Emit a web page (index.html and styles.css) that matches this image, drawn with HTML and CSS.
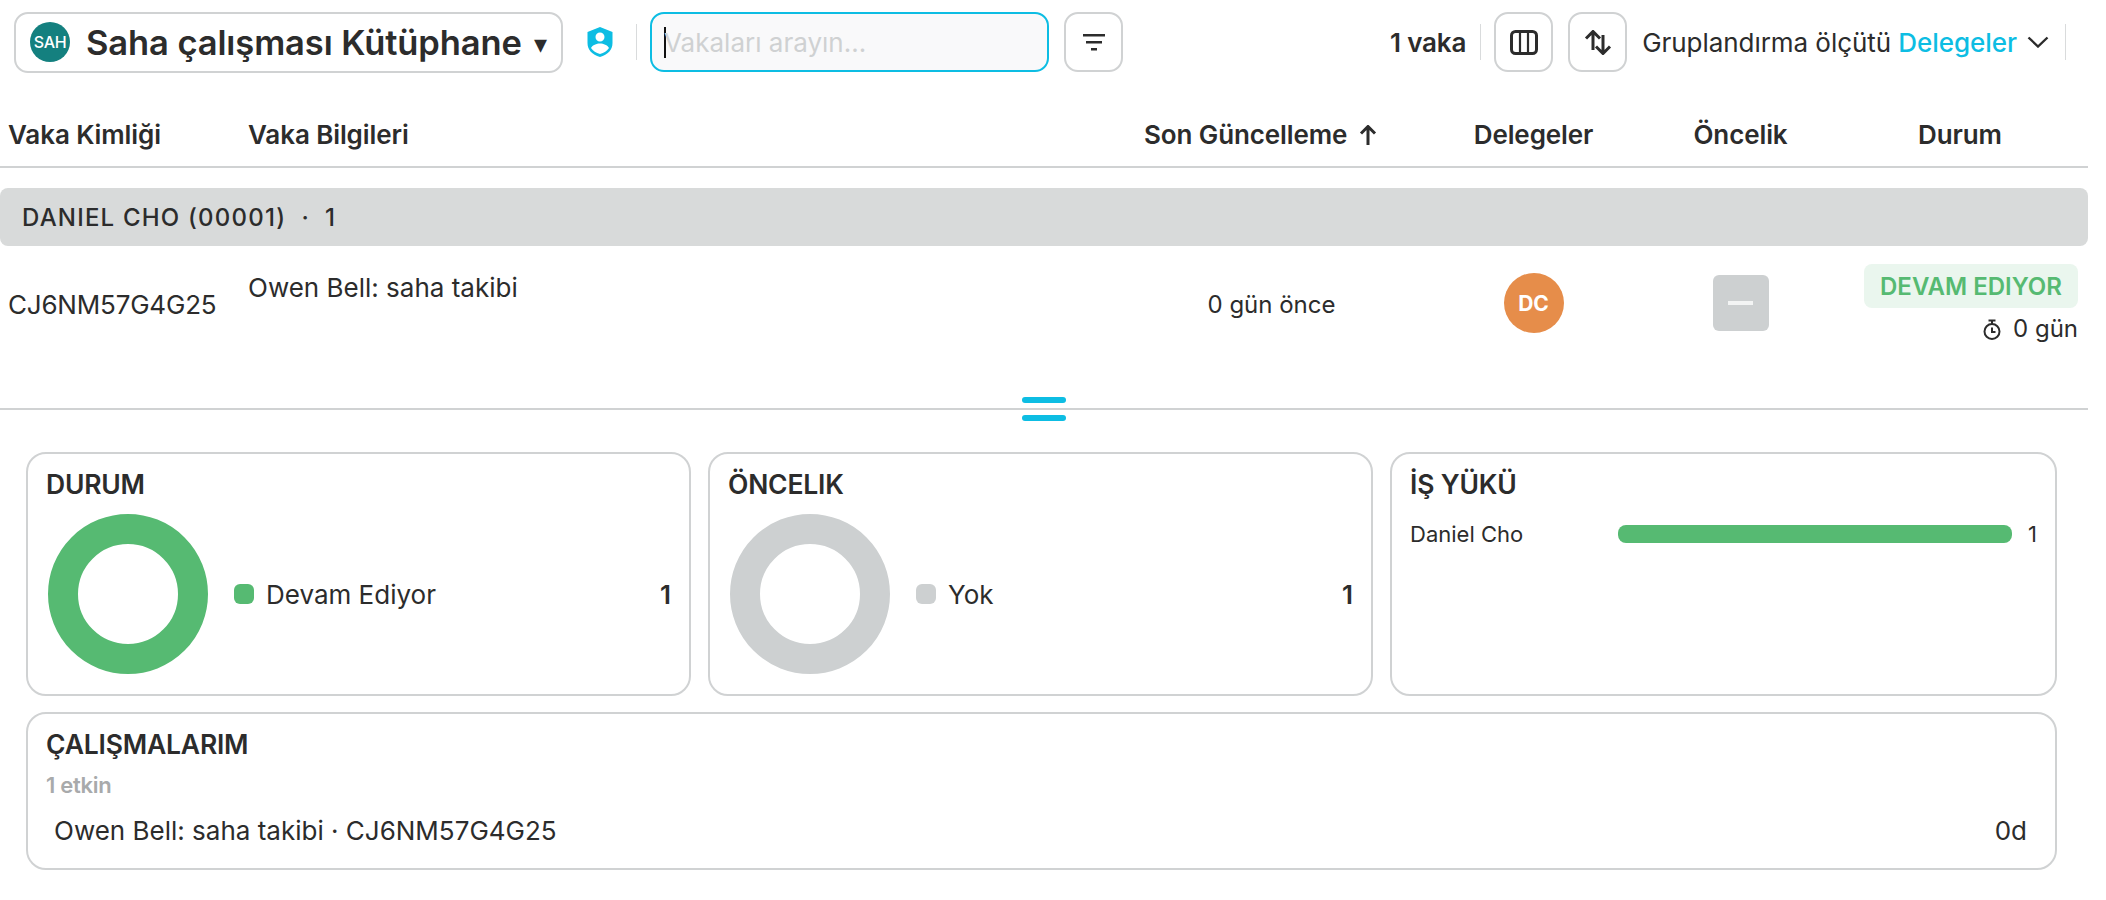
FILE: index.html
```html
<!DOCTYPE html>
<html lang="tr">
<head>
<meta charset="utf-8">
<title>Saha çalışması Kütüphane</title>
<link rel="stylesheet" href="styles.css">
</head>
<body>
<div class="page">
  <header class="toolbar">
    <button class="lib-select">
      <span class="lib-avatar">SAH</span>
      <span class="lib-name">Saha çalışması Kütüphane</span>
      <span class="lib-caret">▾</span>
    </button>
    <svg class="shield" viewBox="0 0 26 30"><path fill="#0dbde3" fill-rule="evenodd" d="M13 0 25.500 5v11c0 7-4.500 11.500-12.500 14C5 27.500.5 23 .5 16V5zM13 5.500a4.500 4.500 0 1 0 0 9 4.500 4.500 0 0 0 0-9zM4 21c2 3 5 5 9 6 4-1 7-3 9-6-1.500-3-5.500-4.500-9-4.500S5.500 18 4 21z"/></svg>
    <span class="vsep sep-a"></span>
    <div class="search"><span class="cursor"></span><span class="placeholder">Vakaları arayın...</span></div>
    <button class="icon-btn filter-btn">
      <svg width="24" height="24" viewBox="0 0 24 24"><path fill="#2c2c2c" d="M1 4h22v2.600H1zM4 11h16v2.600H4zM9 18h6v2.600H9z"/></svg>
    </button>
    <span class="spacer"></span>
    <span class="count">1 vaka</span>
    <span class="vsep sep-b"></span>
    <button class="icon-btn">
      <svg width="28" height="25" viewBox="0 0 28 25" fill="none" stroke="#2c2c2c"><rect x="1.500" y="1.500" width="25" height="22" rx="4" stroke-width="3"/><path stroke-width="2.200" d="M10 2v21M18 2v21"/></svg>
    </button>
    <button class="icon-btn sort-btn">
      <svg width="28" height="25" viewBox="0 0 28 25" fill="none" stroke="#2c2c2c" stroke-width="3"><path d="M9 20V2M2 8.500 9 1.500l7 7M19 5v18M12 16.500l7 7 7-7"/></svg>
    </button>
    <span class="group-by">Gruplandırma ölçütü <span class="accent">Delegeler</span></span>
    <svg class="chevron" width="22" height="12" viewBox="0 0 22 12" fill="none" stroke="#2c2c2c" stroke-width="2.400"><path d="M1.500 1.500 11 10.500l9.500-9"/></svg>
    <span class="vsep sep-c"></span>
  </header>

  <div class="table-head cols">
    <div class="cell-id">Vaka Kimliği</div>
    <div>Vaka Bilgileri</div>
    <div class="head-updated">Son Güncelleme <svg class="arrow" width="18" height="20" viewBox="0 0 18 20" fill="none" stroke="#2c2c2c" stroke-width="3"><path d="M9 20V2M2 8.500 9 1.500l7 7"/></svg></div>
    <div class="center">Delegeler</div>
    <div class="center">Öncelik</div>
    <div class="head-status">Durum</div>
  </div>

  <div class="group-row">DANIEL CHO (00001) &nbsp;· &nbsp;1</div>

  <div class="row cols">
    <div class="cell-id mid id-text">CJ6NM57G4G25</div>
    <div class="info">Owen Bell: saha takibi</div>
    <div class="updated mid">0 gün önce</div>
    <div class="center mid"><span class="person">DC</span></div>
    <div class="center mid"><span class="priority"><span class="dash"></span></span></div>
    <div class="status">
      <span class="badge">DEVAM EDIYOR</span>
      <span class="elapsed">
        <svg width="18" height="21" viewBox="0 0 18 21" fill="none" stroke="#2c2c2c" stroke-width="2"><circle cx="9" cy="12.500" r="7.500"/><path d="M5.500 1.500h7M9 2v3M9 8.500v4.500h3.500"/></svg>
        0 gün
      </span>
    </div>
  </div>

  <div class="splitter"><span class="grip"></span><span class="grip"></span></div>

  <section class="dash-area">
    <div class="card-row">
      <article class="card">
        <h2 class="card-title">DURUM</h2>
        <div class="donut-row">
          <span class="donut green"></span>
          <span class="swatch swatch-green"></span>
          <span class="legend">Devam Ediyor</span>
          <b class="legend-count">1</b>
        </div>
      </article>
      <article class="card">
        <h2 class="card-title">ÖNCELIK</h2>
        <div class="donut-row">
          <span class="donut grey"></span>
          <span class="swatch swatch-grey"></span>
          <span class="legend">Yok</span>
          <b class="legend-count">1</b>
        </div>
      </article>
      <article class="card">
        <h2 class="card-title">İŞ YÜKÜ</h2>
        <div class="load-row">
          <span class="load-name">Daniel Cho</span>
          <span class="load-bar"></span>
          <span class="load-count">1</span>
        </div>
      </article>
    </div>
    <article class="card work-card">
      <h2 class="card-title">ÇALIŞMALARIM</h2>
      <div class="active">1 etkin</div>
      <div class="work-row"><span>Owen Bell: saha takibi · CJ6NM57G4G25</span><span>0d</span></div>
    </article>
  </section>
</div>
</body>
</html>
```
FILE: styles.css
```css
* { box-sizing: border-box; }
html, body { margin: 0; height: 100%; background: #fff; overflow: hidden; }
body { font-family: Inter, "Noto Sans", sans-serif; color: #2c2c2c; }
button { font-family: inherit; color: inherit; background: #fff; padding: 0; cursor: pointer; }
h2 { margin: 0; }
.page { width: 2088px; }

.toolbar { height: 85px; padding: 12px 0 13px 14px; display: flex; align-items: center; }
.lib-select { width: 549px; height: 61px; border: 2px solid #d0d2d3; border-radius: 14px; display: flex; align-items: center; padding-left: 14px; }
.lib-avatar { width: 40px; height: 40px; border-radius: 50%; background: #14807f; color: #fff; font-size: 16px; font-weight: 500; display: flex; align-items: center; justify-content: center; letter-spacing: -0.3px; flex: none; }
.lib-name { margin-left: 16px; font-size: 34.500px; font-weight: 600; white-space: nowrap; letter-spacing: -0.1px; }
.lib-caret { margin-left: 12px; font-size: 26px; line-height: 1; padding-top: 3px; }
.shield { width: 26px; height: 30px; margin-left: 24px; flex: none; }
.vsep { width: 1px; height: 36px; background: #d9dbdc; flex: none; }
.sep-a { margin-left: 23px; }
.search { width: 399px; height: 60px; margin-left: 13px; border: 2px solid #0dbde3; border-radius: 14px; background: #f9f9fa; display: flex; align-items: center; padding-left: 12px; position: relative; }
.cursor { width: 2px; height: 31px; background: #111; margin-right: -2px; flex: none; }
.placeholder { font-size: 26px; color: #cfd1d2; white-space: nowrap; }
.icon-btn { width: 59px; height: 60px; border: 2px solid #d0d2d3; border-radius: 14px; display: flex; align-items: center; justify-content: center; flex: none; }
.filter-btn { margin-left: 15px; }
.sort-btn { margin-left: 15px; }
.spacer { flex: 1; }
.count { font-size: 26px; font-weight: 600; white-space: nowrap; letter-spacing: -0.2px; }
.sep-b { margin: 0 13px 0 14px; }
.group-by { margin-left: 15px; font-size: 26px; white-space: nowrap; letter-spacing: -0.05px; }
.accent { color: #0dbde3; font-weight: 500; }
.chevron { margin-left: 10px; flex: none; }
.sep-c { margin-left: 16px; margin-right: 22px; }

.cols { display: grid; grid-template-columns: 248px 882px 260px 287px 127px 284px; }
.table-head { height: 83px; border-bottom: 2px solid #d0d2d3; align-items: center; padding-top: 18px; font-size: 26px; font-weight: 600; white-space: nowrap; letter-spacing: -0.1px; }
.cell-id { padding-left: 8px; }
.center { text-align: center; }
.head-updated { padding-left: 14px; display: flex; align-items: center; }
.arrow { margin-left: 12px; flex: none; }
.head-status { padding: 0 28px 0 56px; text-align: center; }

.group-row { margin-top: 20px; height: 58px; background: #d8dada; border-radius: 8px; padding-left: 22px; display: flex; align-items: center; font-size: 24px; font-weight: 500; letter-spacing: 1.2px; white-space: pre; }

.row { height: 164px; border-bottom: 2px solid #d0d2d3; font-size: 26px; white-space: nowrap; }
.mid { height: 116px; display: flex; align-items: center; }
.id-text { letter-spacing: -0.2px; }
.center.mid { height: 114px; justify-content: center; }
.info { padding-top: 28px; line-height: 28px; }
.updated { justify-content: center; padding-left: 23px; font-size: 24px; }
.person { width: 60px; height: 60px; border-radius: 50%; background: #e68d4a; color: #fff; font-size: 21px; font-weight: 700; display: flex; align-items: center; justify-content: center; }
.priority { width: 56px; height: 56px; border-radius: 6px; background: #cdd0d1; display: flex; align-items: center; justify-content: center; }
.dash { width: 25px; height: 4px; background: #f3f4f4; }
.status { display: flex; flex-direction: column; align-items: flex-end; padding: 18px 10px 0 0; }
.badge { height: 44px; width: 214px; background: #eaf6ee; border-radius: 8px; color: #56ba72; font-size: 24px; font-weight: 600; display: flex; align-items: center; justify-content: center; }
.elapsed { display: flex; align-items: center; gap: 12px; margin-top: 7px; line-height: 28px; font-size: 24px; }

.splitter { height: 46px; margin-top: -13px; position: relative; display: flex; flex-direction: column; align-items: center; gap: 12px; }
.grip { width: 44px; height: 6px; background: #0dbde3; border-radius: 3px; }

.dash-area { padding: 9px 31px 0 26px; }
.card-row { display: grid; grid-template-columns: repeat(3, 1fr); gap: 17px; }
.card { height: 244px; border: 2px solid #d0d2d3; border-radius: 20px; padding: 13px 18px 0; }
.card-title { font-size: 26.500px; font-weight: 600; line-height: 34px; letter-spacing: -0.2px; }
.donut-row { display: flex; align-items: center; margin-top: 13px; padding-left: 2px; font-size: 26px; }
.donut { width: 160px; height: 160px; border-radius: 50%; border: 30px solid; flex: none; }
.green { border-color: #56ba72; }
.grey { border-color: #cdd0d1; }
.swatch { width: 20px; height: 20px; border-radius: 6px; margin-left: 26px; flex: none; }
.swatch-green { background: #56ba72; }
.swatch-grey { background: #cdd0d1; }
.legend { margin-left: 12px; }
.legend-count { margin-left: auto; font-weight: 600; }
.load-row { display: flex; align-items: center; margin-top: 20px; font-size: 22px; }
.load-name { width: 208px; }
.load-bar { width: 394px; height: 18px; border-radius: 8px; background: #56ba72; }
.load-count { margin-left: 16px; }

.work-card { height: 158px; margin-top: 16px; }
.active { font-size: 22px; font-weight: 600; color: #a8aaab; margin-top: 10px; line-height: 28px; letter-spacing: -0.3px; }
.work-row { display: flex; justify-content: space-between; font-size: 26px; padding: 17px 10px 0 8px; line-height: 30px; }
```
